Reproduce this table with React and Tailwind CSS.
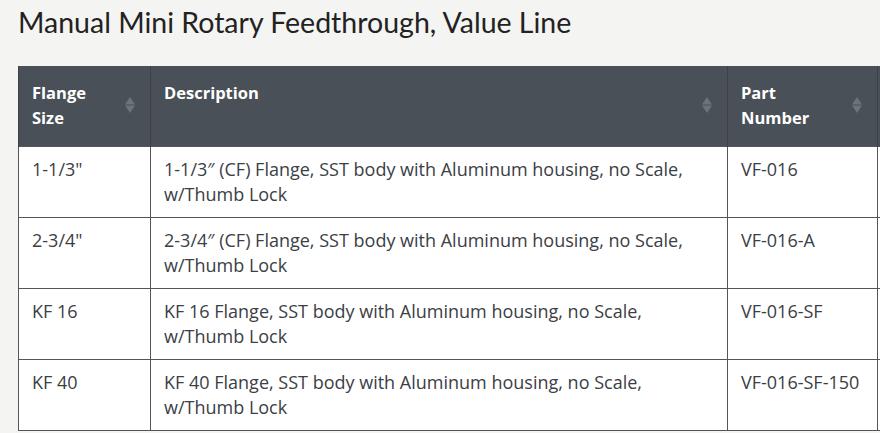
const rows = [
  { size: '1-1/3"', desc: ['1-1/3\u2033 (CF) Flange, SST body with Aluminum housing, no Scale,', 'w/Thumb Lock'], part: 'VF-016' },
  { size: '2-3/4"', desc: ['2-3/4\u2033 (CF) Flange, SST body with Aluminum housing, no Scale,', 'w/Thumb Lock'], part: 'VF-016-A' },
  { size: 'KF 16', desc: ['KF 16 Flange, SST body with Aluminum housing, no Scale,', 'w/Thumb Lock'], part: 'VF-016-SF' },
  { size: 'KF 40', desc: ['KF 40 Flange, SST body with Aluminum housing, no Scale,', 'w/Thumb Lock'], part: 'VF-016-SF-150' },
];

function SortIcon() {
  return (
    <svg width="10" height="16" viewBox="0 0 10 16" className="shrink-0">
      <path d="M5 0 L10 7.5 L0 7.5 Z" fill="#6c737a" />
      <path d="M0 8.5 L10 8.5 L5 16 Z" fill="#6c737a" />
    </svg>
  );
}

function HeadCell({ lines, width }) {
  return (
    <th className={`${width} border-x border-[#3d4248] px-[13px] pt-[14px] pb-[16px] text-left align-top`}>
      <div className="flex items-start justify-between">
        <span className="text-[16.5px] font-bold leading-[25px] text-white">
          {lines.map((l) => (
            <span key={l} className="block">{l}</span>
          ))}
        </span>
        <span className="mr-[2px] mt-[17px]">
          <SortIcon />
        </span>
      </div>
    </th>
  );
}

export default function App() {
  return (
    <div className="h-[433px] w-[880px] overflow-hidden bg-[#f4f4f2] font-['Open_Sans',sans-serif]">
      <h1 className="pl-[18px] pt-[2px] font-['Lato',sans-serif] text-[28.5px] leading-[40px] text-[#222]">
        Manual Mini Rotary Feedthrough, Value Line
      </h1>
      <div className="mt-[24px] pl-[18px]">
        <table className="w-[1000px] table-fixed border-collapse">
          <thead>
            <tr className="h-[80px] bg-[#495057]">
              <HeadCell lines={['Flange', 'Size']} width="w-[132px]" />
              <HeadCell lines={['Description']} width="w-[577px]" />
              <HeadCell lines={['Part', 'Number']} width="w-[150px]" />
              <th className="bg-[#495057]" />
            </tr>
          </thead>
          <tbody className="bg-white text-[18px] leading-[25px] text-[#3a4046]">
            {rows.map((r) => (
              <tr key={r.part} className="h-[71px]">
                <td className="border border-[#555] px-[13px] pt-[10px] pb-[10px] align-top">{r.size}</td>
                <td className="border border-[#555] px-[13px] pt-[10px] pb-[10px] align-top">
                  {r.desc.map((d) => (
                    <span key={d} className="block">{d}</span>
                  ))}
                </td>
                <td className="border border-[#555] px-[13px] pt-[10px] pb-[10px] align-top">{r.part}</td>
                <td className="border border-[#555]" />
              </tr>
            ))}
          </tbody>
        </table>
      </div>
    </div>
  );
}
